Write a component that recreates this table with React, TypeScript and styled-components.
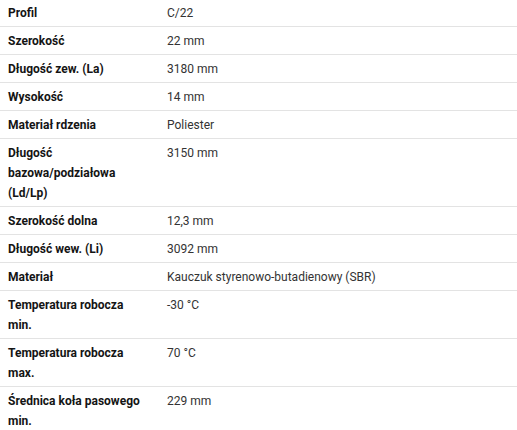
import React from "react";
import styled, { createGlobalStyle } from "styled-components";

const Global = createGlobalStyle`
  html, body { margin: 0; padding: 0; background: #fff; }
  body { font-family: Roboto, "Liberation Sans", sans-serif; }
`;

const Table = styled.div`
  display: grid;
  grid-template-columns: 159px 1fr;
  width: 517px;
  margin-top: -1px;
`;

const Row = styled.div`
  display: contents;
`;

const Cell = styled.div<{ $label?: boolean; $last?: boolean }>`
  padding: ${(p) => (p.$label ? "4px 14px 3px 8px" : "4px 8px 3px")};
  font-size: 12px;
  line-height: 20px;
  border-bottom: ${(p) => (p.$last ? "none" : "1px solid #e3e3e3")};
  color: ${(p) => (p.$label ? "#141414" : "#333")};
  font-weight: ${(p) => (p.$label ? 700 : 400)};
`;

const rows: [string, string][] = [
  ["Profil", "C/22"],
  ["Szerokość", "22 mm"],
  ["Długość zew. (La)", "3180 mm"],
  ["Wysokość", "14 mm"],
  ["Materiał rdzenia", "Poliester"],
  ["Długość bazowa/podziałowa (Ld/Lp)", "3150 mm"],
  ["Szerokość dolna", "12,3 mm"],
  ["Długość wew. (Li)", "3092 mm"],
  ["Materiał", "Kauczuk styrenowo-butadienowy (SBR)"],
  ["Temperatura robocza min.", "-30 °C"],
  ["Temperatura robocza max.", "70 °C"],
  ["Średnica koła pasowego min.", "229 mm"],
];

export default function App() {
  return (
    <>
      <Global />
      <Table>
        {rows.map(([k, v], i) => (
          <Row key={k}>
            <Cell $label $last={i === rows.length - 1}>{k}</Cell>
            <Cell $last={i === rows.length - 1}>{v}</Cell>
          </Row>
        ))}
      </Table>
    </>
  );
}
